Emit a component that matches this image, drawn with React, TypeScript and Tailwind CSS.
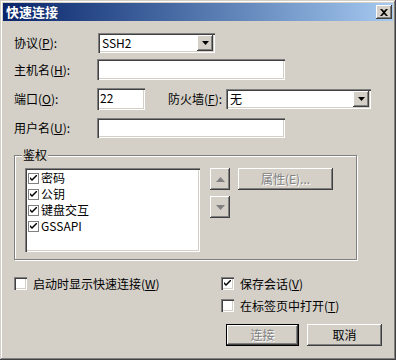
import React from "react";

const sunken =
  "bg-white shadow-[inset_1px_1px_#808080,inset_2px_2px_#404040,inset_-1px_-1px_#ffffff,inset_-2px_-2px_#d4d0c8]";
const raised =
  "bg-[#d4d0c8] shadow-[inset_-1px_-1px_#404040,inset_1px_1px_#ffffff,inset_-2px_-2px_#808080,inset_2px_2px_#d4d0c8]";

function Acc({ k }: { k: string }) {
  return <span className="underline underline-offset-[1px]">{k}</span>;
}

function DownArrow({ color = "#000" }: { color?: string }) {
  return (
    <svg width="7" height="4" viewBox="0 0 7 4">
      <polygon points="0,0 7,0 3.5,4" fill={color} />
    </svg>
  );
}

function Combo({ value, width }: { value: string; width: string }) {
  return (
    <div className={`${sunken} ${width} h-[20px] flex items-center justify-between pl-[4px] pr-[2px]`}>
      <span className="leading-[14px]">{value}</span>
      <div className={`${raised} w-[16px] h-[16px] flex items-center justify-center`}>
        <DownArrow />
      </div>
    </div>
  );
}

function Check({ checked, size = "w-[13px] h-[13px]" }: { checked: boolean; size?: string }) {
  return (
    <div className={`${sunken} ${size} flex items-center justify-center shrink-0`}>
      {checked && (
        <svg width="7" height="7" viewBox="0 0 7 7">
          <path d="M0 2 L0 4 L2 6 L7 1 L7 -1 L2 4 Z" fill="#000" />
        </svg>
      )}
    </div>
  );
}

function ListCheck() {
  return (
    <div className="w-[11px] h-[11px] border border-[#808080] bg-white flex items-center justify-center shrink-0">
      <svg width="7" height="7" viewBox="0 0 7 7">
        <path d="M0 2 L0 4 L2 6 L7 1 L7 -1 L2 4 Z" fill="#000" />
      </svg>
    </div>
  );
}

const disabledText = "text-[#808080] [text-shadow:1px_1px_#ffffff]";

export default function App() {
  return (
    <div className="w-[396px] h-[360px] bg-[#d4d0c8] p-[3px] shadow-[inset_-1px_-1px_#404040,inset_1px_1px_#d4d0c8,inset_-2px_-2px_#808080,inset_2px_2px_#ffffff] font-['Noto_Sans_CJK_SC','Noto_Sans',sans-serif] text-[12px] leading-[14px] text-black">
      {/* Title bar */}
      <div className="h-[18px] flex items-center justify-between bg-gradient-to-r from-[#0a246a] to-[#a6caf0] pl-[3px] pr-[1px]">
        <span className="text-white font-bold text-[13px] leading-[16px]">快速连接</span>
        <div className={`${raised} w-[16px] h-[14px] flex items-center justify-center`}>
          <svg width="8" height="7" viewBox="0 0 8 7">
            <path d="M0 0 L2 0 L4 2 L6 0 L8 0 L5 3.5 L8 7 L6 7 L4 5 L2 7 L0 7 L3 3.5 Z" fill="#000" />
          </svg>
        </div>
      </div>

      <div className="pl-[11px]">
        {/* Protocol */}
        <div className="mt-[12px] h-[20px] flex items-center">
          <span className="w-[84px]">协议(<Acc k="P" />):</span>
          <Combo value="SSH2" width="w-[117px]" />
        </div>
        {/* Host */}
        <div className="mt-[6px] h-[21px] flex items-center">
          <span className="w-[83px]">主机名(<Acc k="H" />):</span>
          <div className={`${sunken} w-[188px] h-[21px]`} />
        </div>
        {/* Port / firewall */}
        <div className="mt-[8px] h-[22px] flex items-center">
          <span className="w-[83px]">端口(<Acc k="O" />):</span>
          <div className={`${sunken} w-[48px] h-[22px] pl-[3px] pt-[3px]`}>22</div>
          <span className="ml-[23px] w-[58px]">防火墙(<Acc k="F" />):</span>
          <Combo value="无" width="w-[145px]" />
        </div>
        {/* User */}
        <div className="mt-[8px] h-[20px] flex items-center">
          <span className="w-[83px]">用户名(<Acc k="U" />):</span>
          <div className={`${sunken} w-[188px] h-[20px]`} />
        </div>

        {/* Group box */}
        <div className="relative mt-[17px] w-[343px] h-[105px] border border-[#808080] shadow-[1px_1px_#ffffff,inset_1px_1px_#ffffff] pl-[10px] pt-[12px] flex">
          <span className="absolute -top-[8px] left-[7px] px-[1px] bg-[#d4d0c8]">鉴权</span>
          <div className={`${sunken} w-[175px] h-[84px] pt-[2px] pl-[3px]`}>
            {["密码", "公钥", "键盘交互", "GSSAPI"].map((t) => (
              <div key={t} className="h-[16px] flex items-center gap-[2px]">
                <ListCheck />
                <span>{t}</span>
              </div>
            ))}
          </div>
          <div className="ml-[10px] flex flex-col gap-[6px]">
            <div className={`${raised} w-[20px] h-[22px] flex items-center justify-center`}>
              <svg width="9" height="5" viewBox="0 0 9 5">
                <polygon points="0,5 9,5 4.5,0" fill="#808080" />
              </svg>
            </div>
            <div className={`${raised} w-[20px] h-[22px] flex items-center justify-center`}>
              <svg width="9" height="5" viewBox="0 0 9 5">
                <polygon points="0,0 9,0 4.5,5" fill="#808080" />
              </svg>
            </div>
          </div>
          <div className={`${raised} ml-[8px] w-[95px] h-[22px] flex items-center justify-center ${disabledText}`}>
            属性(E)...
          </div>
        </div>

        {/* Bottom */}
        <div className="mt-[17px] flex">
          <div className="w-[207px] flex items-start">
            <div className="flex items-center gap-[6px] h-[13px]">
              <Check checked={false} />
              <span>
                启动时显示快速连接(<Acc k="W" />)
              </span>
            </div>
          </div>
          <div className="flex flex-col">
            <div className="flex items-center gap-[6px] h-[13px]">
              <Check checked={true} />
              <span>
                保存会话(<Acc k="V" />)
              </span>
            </div>
            <div className="mt-[9px] flex items-center gap-[6px] h-[13px]">
              <Check checked={false} />
              <span>
                在标签页中打开(<Acc k="T" />)
              </span>
            </div>
            <div className="mt-[12px] ml-[5px] flex gap-[8px]">
              <div className="w-[73px] h-[22px] border border-black">
                <div className={`${raised} w-full h-full flex items-center justify-center ${disabledText}`}>
                  连接
                </div>
              </div>
              <div className={`${raised} w-[75px] h-[22px] flex items-center justify-center`}>取消</div>
            </div>
          </div>
        </div>
      </div>
    </div>
  );
}
